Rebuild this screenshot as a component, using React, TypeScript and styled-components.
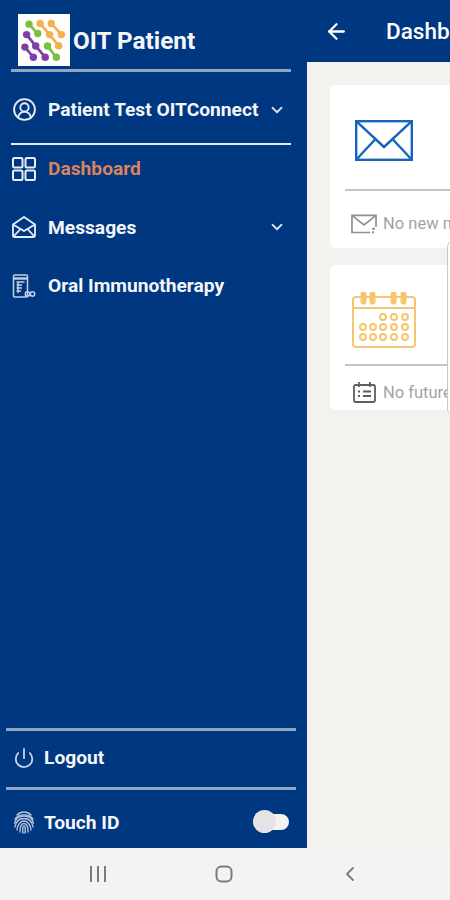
import React from 'react';
import styled, { createGlobalStyle } from 'styled-components';
import { ArrowLeft, ChevronDown, ChevronLeft, CircleUserRound, Power } from 'lucide-react';

const GlobalStyle = createGlobalStyle`
  html, body {
    margin: 0;
    padding: 0;
    background: #f3f3f3;
  }
  * {
    box-sizing: border-box;
  }
`;

const BLUE = '#003781';

const Screen = styled.div`
  width: 450px;
  height: 900px;
  display: flex;
  flex-direction: column;
  overflow: hidden;
  font-family: Roboto, "Liberation Sans", sans-serif;
`;

const Body = styled.div`
  flex: 1;
  display: flex;
  min-height: 0;
  position: relative;
`;

const Sidebar = styled.aside`
  width: 307px;
  flex-shrink: 0;
  background: ${BLUE};
  display: flex;
  flex-direction: column;
`;

const Brand = styled.div`
  height: 69px;
  padding: 14px 0 0 18px;
  display: flex;
  gap: 3px;
`;

const LogoBox = styled.div`
  width: 52px;
  height: 52px;
  background: #fff;
  flex-shrink: 0;
`;

const BrandName = styled.div`
  color: #f4f6fa;
  font-size: 24.3px;
  font-weight: 700;
  line-height: 52px;
  padding-top: 1px;
`;

const Rule = styled.div<{ $left: number; $width: number; $color: string; $thick?: number }>`
  height: ${p => p.$thick ?? 2}px;
  margin-left: ${p => p.$left}px;
  width: ${p => p.$width}px;
  flex-shrink: 0;
  background: ${p => p.$color};
`;

const Row = styled.div<{ $height: number; $iconLeft?: number; $shift?: number; $lift?: number }>`
  height: ${p => p.$height}px;
  flex-shrink: 0;
  display: flex;
  align-items: center;
  padding: ${p => p.$shift ?? 0}px 21px ${p => p.$lift ?? 0}px ${p => p.$iconLeft ?? 12}px;
  color: #fff;
`;

const IconSlot = styled.div<{ $width?: number }>`
  width: ${p => p.$width ?? 36}px;
  flex-shrink: 0;
  display: flex;
  align-items: center;
`;

const Label = styled.span<{ $active?: boolean }>`
  flex: 1;
  font-size: 19.2px;
  font-weight: 700;
  white-space: nowrap;
  color: ${p => (p.$active ? '#d9835f' : '#f4f6fa')};
`;

const MenuList = styled.nav`
  display: flex;
  flex-direction: column;
`;

const Spacer = styled.div`
  flex: 1;
`;

const FooterMenu = styled.div`
  display: flex;
  flex-direction: column;
`;

const Toggle = styled.div`
  position: relative;
  width: 36px;
  height: 16px;
  border-radius: 8px;
  background: #f3f3f3;
  flex-shrink: 0;
  margin-right: -3px;
`;

const ToggleKnob = styled.div`
  position: absolute;
  left: 0;
  top: -4px;
  width: 23px;
  height: 23px;
  border-radius: 50%;
  background: #e4e4e6;
`;

const Main = styled.main`
  flex: 1;
  min-width: 0;
  overflow: hidden;
  background: #f3f2ee;
  display: flex;
  flex-direction: column;
`;

const Header = styled.header`
  height: 62px;
  flex-shrink: 0;
  background: ${BLUE};
  color: #fff;
  display: flex;
  align-items: center;
  padding-left: 17px;
  gap: 37px;
`;

const BackButton = styled.div`
  width: 25px;
  height: 25px;
  flex-shrink: 0;
`;

const HeaderTitle = styled.h1`
  margin: 0;
  font-size: 22.5px;
  font-weight: 500;
  white-space: nowrap;
`;

const Cards = styled.div`
  padding: 23px 0 0 23px;
  display: flex;
  flex-direction: column;
  gap: 17px;
`;

const Card = styled.section<{ $height: number; $top: number }>`
  width: 380px;
  height: ${p => p.$height}px;
  background: #fff;
  border-radius: 5px;
  padding: ${p => p.$top}px 0 0 15px;
  display: flex;
  flex-direction: column;
`;

const CardArt = styled.div<{ $height: number; $left: number }>`
  height: ${p => p.$height}px;
  padding-left: ${p => p.$left}px;
  flex-shrink: 0;
`;

const CardRule = styled.div`
  height: 2px;
  background: #c4c4c4;
  flex-shrink: 0;
`;

const CardFoot = styled.div`
  flex: 1;
  display: flex;
  align-items: center;
  gap: 6px;
  padding: 8px 0 0 6px;
  color: #a3a3a3;
  font-size: 16.5px;
  white-space: nowrap;
`;

const FootIcon = styled.div`
  width: 26px;
  flex-shrink: 0;
  display: flex;
  justify-content: center;
`;

const PopoverEdge = styled.div`
  position: absolute;
  left: 447px;
  top: 240px;
  width: 40px;
  height: 176px;
  background: #fff;
  border: 1px solid #c9c9c9;
  border-radius: 7px;
`;

const NavBar = styled.div`
  height: 52px;
  flex-shrink: 0;
  background: #f3f3f3;
  display: grid;
  grid-template-columns: repeat(3, 126px);
  padding-left: 35px;
  align-items: center;
  justify-items: center;
  color: #7b7b7b;
`;

const Logo = () => (
  <svg width="52" height="52" viewBox="55 42 153 154">
    <g fill="none" strokeWidth="8" strokeLinecap="round">
      <path d="M87 72 L113 100" stroke="#79c143" />
      <path d="M120 70 L148 103 L175 136" stroke="#f6b04e" />
      <path d="M153 70 L183 103" stroke="#f6b04e" />
      <path d="M80 103 L107 137 L135 170" stroke="#7d3fa8" />
      <path d="M75 140 L100 170" stroke="#7d3fa8" />
      <path d="M142 137 L168 170" stroke="#79c143" />
    </g>
    {[[87, 72], [113, 100], [142, 137], [168, 170]].map(([x, y]) => (
      <circle key={`g${x}`} cx={x} cy={y} r="11" fill="#79c143" />
    ))}
    {[[120, 70], [148, 103], [175, 136], [153, 70], [183, 103]].map(([x, y]) => (
      <circle key={`o${x}`} cx={x} cy={y} r="11" fill="#f6b04e" />
    ))}
    {[[80, 103], [107, 137], [135, 170], [75, 140], [100, 170]].map(([x, y]) => (
      <circle key={`p${x}`} cx={x} cy={y} r="11" fill="#7d3fa8" />
    ))}
  </svg>
);

const GridIcon = () => (
  <svg width="24" height="24" viewBox="0 0 24 24" fill="none" stroke="#e8eef8" strokeWidth="2">
    <rect x="1" y="1" width="9.5" height="9.5" rx="1.5" />
    <rect x="13.5" y="1" width="9.5" height="9.5" rx="1.5" />
    <rect x="1" y="13.5" width="9.5" height="9.5" rx="1.5" />
    <rect x="13.5" y="13.5" width="9.5" height="9.5" rx="1.5" />
  </svg>
);

const OpenMailIcon = () => (
  <svg width="24" height="22" viewBox="0 0 24 22" fill="none" stroke="#e8eef8" strokeWidth="1.8" strokeLinejoin="round">
    <path d="M1 8.5 L12 1 L23 8.5 V19.5 A1.5 1.5 0 0 1 21.5 21 H2.5 A1.5 1.5 0 0 1 1 19.5 Z" />
    <path d="M1 8.5 L12 15 L23 8.5" />
    <path d="M1.5 20.5 L9 12.5 M22.5 20.5 L15 12.5" />
  </svg>
);

const TherapyIcon = () => (
  <svg width="24" height="24" viewBox="0 0 24 24" fill="none" stroke="#c3d0e4" strokeWidth="1.5">
    <rect x="1.5" y="1" width="14" height="22" rx="1" />
    <path d="M1.5 4.5 H15.5" strokeWidth="2.4" />
    <path d="M4.5 8 H12.5 M4.5 11 H10 M4.5 14 H10 M4.5 17 H9 M6 8 V19" />
    <circle cx="15.5" cy="20" r="2.2" />
    <circle cx="20.5" cy="20" r="2.2" />
  </svg>
);

const FingerprintIcon = () => (
  <svg width="22" height="24" viewBox="0 0 22 24" fill="none" stroke="#b5c4dc" strokeWidth="1.4" strokeLinecap="round">
    <path d="M4 5 C8 1 14 1 18 5" />
    <path d="M2 9 C6 3.5 16 3.5 20 9" />
    <path d="M1.5 13 C3 7 8 6 11 6 C14 6 19 7 20.5 13" />
    <path d="M2 17 C3 11 7 8.5 11 8.5 C15 8.5 19 11 20 17" />
    <path d="M4 20 C4.5 14 8 11 11 11 C14 11 17.5 14 18 20" />
    <path d="M7 22 C6.5 17 8.5 13.5 11 13.5 C13.5 13.5 15.5 17 15 22" />
    <path d="M10 23 C9 19 10 16 11 16 C12 16 13 19 12 23" />
  </svg>
);

const BlueMail = () => (
  <svg width="58" height="41" viewBox="0 0 58 41" fill="none" stroke="#1565c0" strokeWidth="2.4">
    <rect x="1.2" y="1.2" width="55.6" height="38.6" />
    <path d="M1.2 1.2 L29 27 L56.8 1.2" />
    <path d="M1.2 39.8 L20.5 19 M56.8 39.8 L37.5 19" />
  </svg>
);

const GreyMail = () => (
  <svg width="27" height="20" viewBox="0 0 27 20" fill="none" stroke="#8f8f8f" strokeWidth="1.7">
    <path d="M20 18.8 H1 V1 H26 V13" />
    <path d="M1 1 L13.5 11 L26 1" />
    <path d="M22 15 H25 M22 18.5 H24" strokeWidth="2" />
  </svg>
);

const dotRows: [number, number[]][] = [
  [25, [31, 42, 53]],
  [35, [11, 21, 31, 42, 53]],
  [45, [11, 21, 31, 42, 53]],
];

const YellowCalendar = () => (
  <svg width="64" height="57" viewBox="0 0 64 57" fill="none" stroke="#f6c66f" strokeWidth="2">
    <rect x="1" y="5" width="62" height="50" rx="3" />
    <path d="M1 16 H63" />
    {[9.5, 18.5, 39.5, 49.5].map(x => (
      <rect key={x} x={x} y="0.5" width="4" height="11" rx="2" fill="#f6c66f" />
    ))}
    {dotRows.map(([y, xs]) =>
      xs.map(x => <circle key={`${x}-${y}`} cx={x} cy={y} r="3" />)
    )}
  </svg>
);

const GreyCalendar = () => (
  <svg width="23" height="21" viewBox="0 0 23 21" fill="none" stroke="#5f5f5f" strokeWidth="1.8">
    <rect x="1" y="3" width="21" height="17" rx="1.5" />
    <path d="M6 0 V5 M17 0 V5" />
    <path d="M5 9.5 H7 M10 9.5 H18 M5 14 H7 M10 14 H18" />
  </svg>
);

const App: React.FC = () => {
  return (
    <Screen>
      <GlobalStyle />
      <Body>
        <Sidebar>
          <Brand>
            <LogoBox>
              <Logo />
            </LogoBox>
            <BrandName>OIT Patient</BrandName>
          </Brand>
          <Rule $left={11} $width={280} $color="#8fa5c6" $thick={3} />
          <Row $height={71} $shift={4}>
            <IconSlot>
              <CircleUserRound size={25} strokeWidth={1.8} color="#e8eef8" />
            </IconSlot>
            <Label>Patient Test OITConnect</Label>
            <ChevronDown size={18} strokeWidth={2.4} color="#d5dfee" />
          </Row>
          <Rule $left={11} $width={280} $color="#e6ecf5" />
          <MenuList>
            <Row $height={47}>
              <IconSlot>
                <GridIcon />
              </IconSlot>
              <Label $active>Dashboard</Label>
            </Row>
            <Row $height={70}>
              <IconSlot>
                <OpenMailIcon />
              </IconSlot>
              <Label>Messages</Label>
              <ChevronDown size={18} strokeWidth={2.4} color="#d5dfee" />
            </Row>
            <Row $height={47}>
              <IconSlot>
                <TherapyIcon />
              </IconSlot>
              <Label>Oral Immunotherapy</Label>
            </Row>
          </MenuList>
          <Spacer />
          <FooterMenu>
            <Rule $left={6} $width={290} $color="#8fa5c6" $thick={3} />
            <Row $height={56} $iconLeft={13} $lift={3}>
              <IconSlot $width={31}>
                <Power size={22} strokeWidth={2} color="#c3d0e4" />
              </IconSlot>
              <Label>Logout</Label>
            </Row>
            <Rule $left={6} $width={290} $color="#8fa5c6" $thick={3} />
            <Row $height={58} $iconLeft={13} $shift={6}>
              <IconSlot $width={31}>
                <FingerprintIcon />
              </IconSlot>
              <Label>Touch ID</Label>
              <Toggle>
                <ToggleKnob />
              </Toggle>
            </Row>
          </FooterMenu>
        </Sidebar>
        <Main>
          <Header>
            <BackButton>
              <ArrowLeft size={25} strokeWidth={2.2} />
            </BackButton>
            <HeaderTitle>Dashboard</HeaderTitle>
          </Header>
          <Cards>
            <Card $height={163} $top={35}>
              <CardArt $height={69} $left={10}>
                <BlueMail />
              </CardArt>
              <CardRule />
              <CardFoot>
                <FootIcon>
                  <GreyMail />
                </FootIcon>
                No new messages
              </CardFoot>
            </Card>
            <Card $height={145} $top={27}>
              <CardArt $height={72} $left={7}>
                <YellowCalendar />
              </CardArt>
              <CardRule />
              <CardFoot>
                <FootIcon>
                  <GreyCalendar />
                </FootIcon>
                No future appointments
              </CardFoot>
            </Card>
          </Cards>
        </Main>
        <PopoverEdge />
      </Body>
      <NavBar>
        <svg width="18" height="16" viewBox="0 0 18 16" stroke="#7b7b7b" strokeWidth="2">
          <path d="M2 0 V16 M9 0 V16 M16 0 V16" />
        </svg>
        <svg width="18" height="18" viewBox="0 0 18 18" fill="none" stroke="#7b7b7b" strokeWidth="2">
          <rect x="1.5" y="1.5" width="15" height="15" rx="5" />
        </svg>
        <ChevronLeft size={24} strokeWidth={1.8} />
      </NavBar>
    </Screen>
  );
};

export default App;
